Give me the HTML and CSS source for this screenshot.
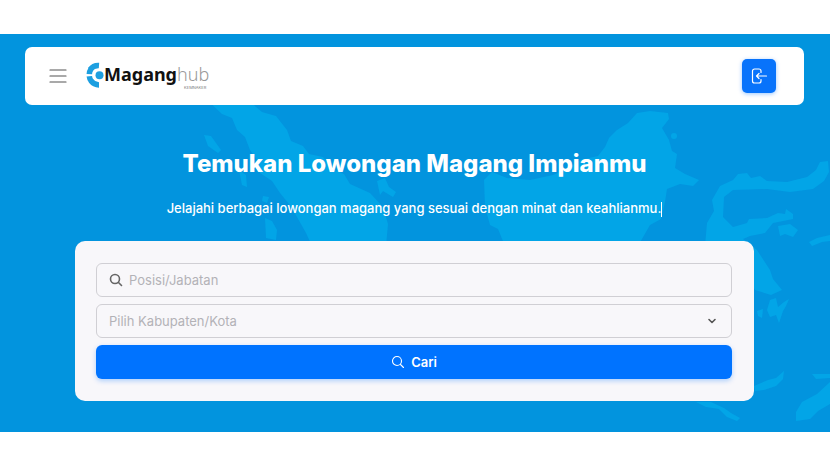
FILE: index.html
```html
<!DOCTYPE html>
<html lang="id">
<head>
    <meta charset="utf-8" />
    <meta name="viewport" content="width=device-width, initial-scale=1" />
    <title>Maganghub</title>
    <link rel="stylesheet" href="styles.css">
</head>
<body>
    <main class="hero">
        <svg class="hero-map" viewBox="0 34 830 398" preserveAspectRatio="xMidYMid slice" aria-hidden="true">
            <!-- Sumatra -->
            <path d="M207 100L248 100L262 112L276 116L287 130L291 141L303 146L309 154L323 157L333 169L344 174L350 184L370 193L383 207L388 224L386 246L312 246L306 233L297 217L289 204L280 193L272 181L260 173L257 160L250 150L245 137L237 130L232 118L222 114Z" />
            <path d="M204 135L211 136L221 150L218 153L208 146Z" />
            <path d="M239 170L246 175L247 187L242 185Z" />
            <path d="M263 196L269 197L267 203L262 201Z" />
            <path d="M265 218L272 221L277 230L276 240L266 238Z" />
            <path d="M377 181L385 178L389 187L396 192L393 197L383 191L380 195Z" />
            <!-- Kalimantan -->
            <path d="M637 113L650 111L668 113L669 119L662 128L669 140L672 151L677 154L675 168L685 174L699 180L693 186L680 184L667 189L665 202L661 219L650 225L638 246L505 246L498 229L490 225L485 207L484 180L492 172L507 178L530 180L553 175L567 169L580 160L598 156L605 147L609 138L617 130L628 123Z" />
            <circle cx="674" cy="136" r="3" />
            <!-- Sulawesi -->
            <path d="M705 246L707 223L714 211L712 200L720 186L733 180L738 174L747 173L751 178L760 176L767 181L787 182L807 177L816 170L820 162L828 161L829 172L824 181L813 189L790 192L767 189L733 190L724 197L723 217L733 227L747 223L749 219L767 218L778 213L785 214L786 209L793 214L793 219L773 223L765 233L750 236L743 239L757 250L770 270L773 279L782 290L771 295L755 290L740 263Z" />
            <path d="M778 226L790 224L798 230L793 237L785 234L780 236Z" />
            <path d="M809 242L817 238L830 235L830 241L822 242L812 246Z" />
            <path d="M770 300L776 298L778 307L784 302L789 299L786 306L783 311L779 323L776 315L770 317L767 310Z" />
            <path d="M757 311L763 309L762 318L758 316Z" />
            <!-- Nusa Tenggara -->
            <path d="M754 386L768 380L776 378L784 371L783 379L776 386L764 390L755 391Z" />
            <path d="M696 402L711 402L724 408L731 413L740 418L737 421L727 417L719 409L706 407Z" />
            <path d="M796 421L796 412L802 402L817 394L830 382L830 404L818 411L810 419Z" />
            <path d="M812 374L830 374L830 378L816 379Z" />
        </svg>

        <header class="navbar">
            <button type="button" class="menu-button" aria-label="Menu">
                <svg width="18" height="16" viewBox="0 0 18 16" fill="none" stroke="#555" stroke-width="1.2" stroke-linecap="round">
                    <path d="M1 2H17M1 8H17M1 14H17" />
                </svg>
            </button>
            <a href="#" class="brand">
                <svg class="brand-mark" width="18" height="26" viewBox="0 0 18 26">
                    <g fill="none" stroke="#1d9fe0" stroke-width="5.500">
                        <path d="M4.200 7.600A10 10 0 0 1 13 3.500" />
                        <path d="M3.300 12.200A10 10 0 0 1 5 7" />
                        <path d="M3.300 14.200A10 10 0 0 0 5.500 19.500" />
                        <path d="M5 18.900A10 10 0 0 0 13 22.900" />
                    </g>
                    <circle cx="13.500" cy="13.200" r="4" fill="#1d9fe0" />
                </svg>
                <span class="brand-text">
                    <span class="brand-name">Magang<span class="brand-light">hub</span></span>
                    <span class="brand-sub">KEMNAKER</span>
                </span>
            </a>
            <a href="#" class="login-button" aria-label="Masuk">
                <svg width="18" height="18" viewBox="0 0 18 18" fill="none" stroke="#fff" stroke-width="1.2" stroke-linecap="round" stroke-linejoin="round">
                    <path d="M11 5.500V4A2 2 0 0 0 9 2H4.500A2 2 0 0 0 2.500 4V14A2 2 0 0 0 4.500 16H9A2 2 0 0 0 11 14V12.500" />
                    <path d="M16.500 9H6.500M9 6.500L6.500 9L9 11.500" />
                </svg>
            </a>
        </header>

        <section class="intro">
            <h1>Temukan Lowongan Magang Impianmu</h1>
            <p>Jelajahi berbagai lowongan magang yang sesuai dengan minat dan keahlianmu.<span class="cursor"></span></p>
        </section>

        <form class="search-card">
            <label class="field">
                <svg width="14" height="14" viewBox="0 0 14 14" fill="none" stroke="#666" stroke-width="1.6" stroke-linecap="round">
                    <circle cx="6" cy="6" r="4.500" />
                    <path d="M9.500 9.500L12.500 12.500" />
                </svg>
                <input type="text" placeholder="Posisi/Jabatan" aria-label="Posisi/Jabatan" />
            </label>
            <label class="field">
                <select aria-label="Pilih Kabupaten/Kota">
                    <option>Pilih Kabupaten/Kota</option>
                </select>
                <svg width="10" height="8" viewBox="0 0 10 8" fill="none" stroke="#555" stroke-width="1.6" stroke-linecap="round" stroke-linejoin="round">
                    <path d="M2 2.500L5 5.500L8 2.500" />
                </svg>
            </label>
            <button type="button" class="search-button">
                <svg width="14" height="14" viewBox="0 0 14 14" fill="none" stroke="#fff" stroke-width="1.1" stroke-linecap="round">
                    <circle cx="6" cy="6" r="4.500" />
                    <path d="M9.500 9.500L12.500 12.500" />
                </svg>
                Cari
            </button>
        </form>
    </main>
</body>
</html>
```
FILE: styles.css
```css
* { margin: 0; padding: 0; box-sizing: border-box; }

body {
    background: #fff;
    font-family: Inter, "Liberation Sans", sans-serif;
    padding: 34px 0;
}

.hero {
    position: relative;
    isolation: isolate;
    overflow: hidden;
    background: #0294de;
    padding: 13px 26px 31px 25px;
}

.hero-map {
    position: absolute;
    inset: 0;
    z-index: -1;
    width: 100%;
    height: 100%;
    fill: #02a5e7;
}

.navbar {
    display: flex;
    align-items: center;
    gap: 19px;
    height: 58px;
    padding: 0 28px 0 24px;
    background: #fff;
    border-radius: 7px;
}

.menu-button {
    display: flex;
    border: 0;
    background: none;
    cursor: pointer;
}

.brand {
    display: flex;
    align-items: center;
    color: #111;
    text-decoration: none;
}

.brand-mark {
    margin-bottom: 2px;
}

.brand-text {
    display: flex;
    flex-direction: column;
}

.brand-name {
    font-family: "Noto Sans", sans-serif;
    font-size: 18px;
    font-weight: 700;
    line-height: 24px;
}

.brand-light {
    color: #999;
    font-weight: 300;
}

.brand-sub {
    align-self: flex-end;
    margin-right: 3px;
    color: #777;
    font-size: 4px;
    line-height: 4px;
}

.login-button {
    display: flex;
    align-items: center;
    justify-content: center;
    width: 34px;
    height: 34px;
    margin-left: auto;
    background: #0873fb;
    border-radius: 5px;
    box-shadow: 0 1px 4px rgba(0, 115, 255, 0.4);
}

.intro {
    padding: 43px 0 23px;
    color: #fff;
    text-align: center;
}

.intro h1 {
    font-size: 24px;
    font-weight: 800;
    line-height: 32px;
}

.intro p {
    margin-top: 18px;
    font-size: 13px;
    font-weight: 500;
    line-height: 20px;
}

.cursor {
    display: inline-block;
    height: 15px;
    border-left: 1px solid #fff;
    vertical-align: middle;
}

.search-card {
    display: flex;
    flex-direction: column;
    gap: 7px;
    margin: 0 50px;
    padding: 22px 22px 22px 21px;
    background: #f8f7fa;
    border-radius: 10px;
}

.field {
    display: flex;
    align-items: center;
    gap: 6px;
    height: 34px;
    padding: 0 14px 0 12px;
    border: 1px solid #d0cfd4;
    border-radius: 6px;
}

.field input,
.field select {
    flex: 1;
    min-width: 0;
    border: 0;
    outline: 0;
    background: none;
    appearance: none;
    color: #b3b2b7;
    font-family: inherit;
    font-size: 13px;
}

.field input::placeholder {
    color: #b3b2b7;
}

.search-button {
    display: flex;
    align-items: center;
    justify-content: center;
    gap: 6px;
    height: 34px;
    border: 0;
    border-radius: 6px;
    background: #0073ff;
    box-shadow: 0 2px 5px rgba(0, 115, 255, 0.3);
    color: #fff;
    font-family: inherit;
    font-size: 13px;
    font-weight: 600;
    cursor: pointer;
}
```
